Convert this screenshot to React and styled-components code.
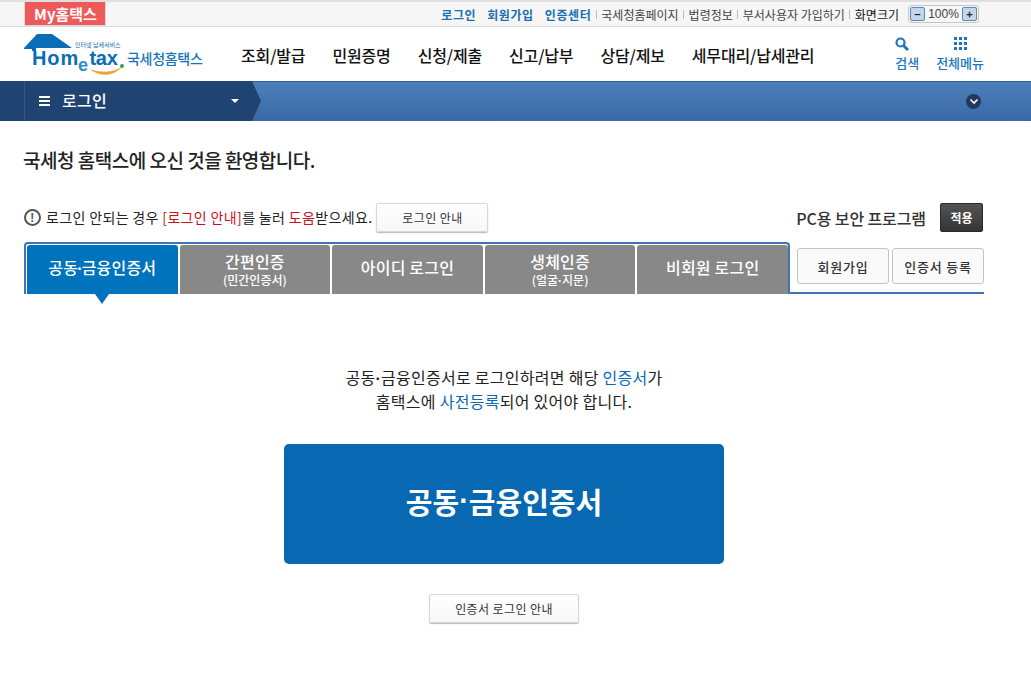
import React from "react";
import styled, { createGlobalStyle } from "styled-components";

const GlobalStyle = createGlobalStyle`
  html, body {
    margin: 0;
    padding: 0;
    background: #fff;
    font-family: "Noto Sans CJK KR", "Noto Sans", sans-serif;
    color: #222;
  }
  * { box-sizing: border-box; }
`;

const gnbItems = ["조회/발급", "민원증명", "신청/제출", "신고/납부", "상담/제보", "세무대리/납세관리"];

export default function App() {
  const tabItems = [
    { label: <>공동<Dot>·</Dot>금융인증서</>, key: "cert", active: true },
    { label: "간편인증", key: "easy", sub: "(민간인증서)" },
    { label: "아이디 로그인", key: "id" },
    { label: "생체인증", key: "bio", sub: <>(얼굴<Dot>·</Dot>지문)</> },
    { label: "비회원 로그인", key: "guest" },
  ];

  return (
    <Page>
      <GlobalStyle />
      <TopBar>
        <MyTab>My홈택스</MyTab>
        <TopLinks>
          <BlueLink>로그인</BlueLink>
          <BlueLink>회원가입</BlueLink>
          <BlueLink>인증센터</BlueLink>
          <GrayLink>국세청홈페이지</GrayLink>
          <GrayLink>법령정보</GrayLink>
          <GrayLink>부서사용자 가입하기</GrayLink>
          <GrayLink $dark>화면크기</GrayLink>
          <ZoomBox>
            <ZoomButton>−</ZoomButton>
            <ZoomValue>100%</ZoomValue>
            <ZoomButton>+</ZoomButton>
          </ZoomBox>
        </TopLinks>
      </TopBar>

      <Header>
        <Logo>
          <svg width="104" height="46" viewBox="0 0 104 46">
            <path d="M0 15 L13 1 H28 L48 15 H12 V18 H8 V16 H0 Z" fill="#0a6db5" />
            <path d="M67 37 Q83 47 97 35 Q84 42 67 37 Z" fill="#f0a030" stroke="#f0a030" strokeWidth="0.6" />
            <text x="8" y="32" fontFamily="Liberation Sans" fontWeight="700" fontSize="20" letterSpacing="0.9" fill="#0a6db5">Hom</text>
            <text x="54" y="38" fontFamily="Liberation Sans" fontWeight="700" fontSize="18" fill="#2b8fc4">e</text>
            <text x="65.5" y="32" fontFamily="Liberation Sans" fontWeight="700" fontSize="20" letterSpacing="-0.3" fill="#0a6db5">tax</text>
            <text x="51" y="14" fontFamily="Noto Sans CJK KR" fontSize="6" fill="#0a6db5">인터넷 납세서비스</text>
            <circle cx="98" cy="33" r="2" fill="#2aa84a" />
          </svg>
          <LogoName>국세청홈택스</LogoName>
        </Logo>
        <Gnb>
          {gnbItems.map((item) => (
            <GnbItem key={item}>{item}</GnbItem>
          ))}
        </Gnb>
        <HeaderTools>
          <ToolButton $iconLeft>
            <svg width="14" height="14" viewBox="0 0 14 14">
              <circle cx="5.5" cy="5.5" r="4" fill="none" stroke="#1b76bd" strokeWidth="2.2" />
              <path d="M8.5 8.5 L13 13" stroke="#1b76bd" strokeWidth="3" />
            </svg>
            <span>검색</span>
          </ToolButton>
          <ToolButton>
            <DotGrid>
              {Array.from({ length: 9 }).map((_, i) => (
                <i key={i} />
              ))}
            </DotGrid>
            <span>전체메뉴</span>
          </ToolButton>
        </HeaderTools>
      </Header>

      <SubBar>
        <LoginCrumb>
          <Burger>
            <i />
            <i />
            <i />
          </Burger>
          <CrumbLabel>로그인</CrumbLabel>
          <CrumbCaret />
        </LoginCrumb>
        <CollapseButton>
          <svg width="10" height="7" viewBox="0 0 10 7">
            <path d="M1.5 1.5 L5 5 L8.5 1.5" fill="none" stroke="#fff" strokeWidth="1.6" />
          </svg>
        </CollapseButton>
      </SubBar>

      <Content>
        <Title>국세청 홈택스에 오신 것을 환영합니다.</Title>

        <NoticeRow>
          <Notice>
            <NoticeIcon>!</NoticeIcon>
            <NoticeText>
              로그인 안되는 경우 <Red>[로그인 안내]</Red>를 눌러 <Red>도움</Red>받으세요.
            </NoticeText>
            <GuideButton>로그인 안내</GuideButton>
          </Notice>
          <Security>
            <SecurityLabel>PC용 보안 프로그램</SecurityLabel>
            <ApplyButton>적용</ApplyButton>
          </Security>
        </NoticeRow>

        <TabRow>
          <Tabs>
            {tabItems.map((tab) => (
              <Tab key={tab.key} $active={tab.active} $hasSub={!!tab.sub}>
                <TabLabel>{tab.label}</TabLabel>
                {tab.sub && <TabSub>{tab.sub}</TabSub>}
              </Tab>
            ))}
          </Tabs>
          <TabActions>
            <ActionButton>회원가입</ActionButton>
            <ActionButton>인증서 등록</ActionButton>
          </TabActions>
        </TabRow>

        <Body>
          <Intro>
            공동<Dot>·</Dot>금융인증서로 로그인하려면 해당 <Blue>인증서</Blue>가
            <br />
            홈택스에 <Blue>사전등록</Blue>되어 있어야 합니다.
          </Intro>
          <CertButton>공동<Dot>·</Dot>금융인증서</CertButton>
          <CertGuide>인증서 로그인 안내</CertGuide>
        </Body>
      </Content>
    </Page>
  );
}

const Page = styled.div`
  width: 1031px;
  height: 694px;
  overflow: hidden;
  background: #fff;
`;

const Dot = styled.span`
  font-family: "Liberation Sans", sans-serif;
  font-weight: 700;
  line-height: 0;
`;

const TopBar = styled.div`
  height: 27px;
  padding: 0 52px 0 24px;
  display: flex;
  justify-content: space-between;
  background: #f6f6f6;
  border-top: 2px solid #dfdfdf;
  border-bottom: 1px solid #dadada;
`;

const MyTab = styled.a`
  width: 82px;
  height: 24px;
  padding-left: 1px;
  display: flex;
  align-items: center;
  justify-content: center;
  background: #ee5a5a;
  border: 1px solid #d9d9d9;
  border-top: 0;
  color: #fff;
  font-size: 15px;
  font-weight: 700;
`;

const TopLinks = styled.div`
  display: flex;
  align-items: center;
  height: 24px;
  font-size: 12px;
`;

const BlueLink = styled.a`
  margin-left: 11px;
  color: #1b6fb0;
  font-weight: 700;
  letter-spacing: 0.6px;
`;

const GrayLink = styled.a`
  display: flex;
  align-items: center;
  color: ${(p) => (p.$dark ? "#111" : "#444")};
  &::before {
    content: "";
    width: 1px;
    height: 9px;
    margin: 0 4.5px;
    background: #bbb;
  }
`;

const ZoomBox = styled.div`
  width: 71px;
  height: 18px;
  margin-left: 9px;
  padding: 0 1px;
  display: flex;
  align-items: center;
  justify-content: space-between;
  border: 1px solid #c6c6c6;
  border-radius: 3px;
`;

const ZoomButton = styled.span`
  width: 15px;
  height: 14px;
  display: flex;
  align-items: center;
  justify-content: center;
  background: #c3d6ea;
  border: 1px solid #5a87b5;
  border-radius: 2px;
  font-size: 11px;
  line-height: 1;
  font-weight: 700;
  color: #223;
`;

const ZoomValue = styled.span`
  font-family: "Liberation Sans", sans-serif;
  font-size: 12px;
  color: #444;
`;

const Header = styled.header`
  height: 54px;
  padding: 0 47px 0 24px;
  display: flex;
  align-items: center;
  background: #fff;
`;

const Logo = styled.div`
  width: 217px;
  height: 46px;
  margin-top: 4px;
  display: flex;
  align-items: flex-start;
`;

const LogoName = styled.span`
  margin: 15px 0 0 -1px;
  font-size: 14px;
  line-height: 20px;
  font-weight: 500;
  letter-spacing: -0.3px;
  color: #1274ba;
  white-space: nowrap;
`;

const Gnb = styled.nav`
  display: flex;
  gap: 27px;
  flex: 1;
  padding-top: 2px;
`;

const GnbItem = styled.a`
  font-size: 16px;
  font-weight: 500;
  letter-spacing: -0.15px;
  color: #111;
  white-space: nowrap;
`;

const HeaderTools = styled.div`
  display: flex;
  gap: 17px;
`;

const ToolButton = styled.a`
  display: flex;
  flex-direction: column;
  align-items: center;
  gap: 3px;
  font-size: 13px;
  line-height: 18px;
  font-weight: 500;
  color: #1b76bd;
  svg {
    margin-right: ${(p) => (p.$iconLeft ? "10px" : "0")};
  }
`;

const DotGrid = styled.div`
  width: 13px;
  height: 14px;
  display: grid;
  grid-template-columns: repeat(3, 3px);
  grid-auto-rows: 3px;
  gap: 2px;
  i {
    background: #1b76bd;
  }
`;

const SubBar = styled.div`
  height: 40px;
  padding: 0 50px 0 0;
  display: flex;
  align-items: center;
  justify-content: space-between;
  background: linear-gradient(#4d80ba, #3a68a6);
  box-shadow: inset 0 1px 0 #2f5f98;
`;

const LoginCrumb = styled.div`
  position: relative;
  width: 252px;
  height: 40px;
  padding-left: 39px;
  display: flex;
  align-items: center;
  gap: 12px;
  background: #204472;
  &::before {
    content: "";
    position: absolute;
    left: 24px;
    top: 0;
    width: 1px;
    height: 40px;
    background: #2e5a8e;
  }
  &::after {
    content: "";
    position: absolute;
    left: 100%;
    top: 0;
    width: 0;
    height: 0;
    border-top: 20px solid transparent;
    border-bottom: 20px solid transparent;
    border-left: 9px solid #204472;
  }
`;

const Burger = styled.div`
  width: 11px;
  display: flex;
  flex-direction: column;
  gap: 2px;
  i {
    height: 2px;
    background: #fff;
  }
`;

const CrumbLabel = styled.span`
  flex: 1;
  padding-bottom: 2px;
  color: #fff;
  font-size: 16px;
  letter-spacing: 0.3px;
  font-weight: 500;
`;

const CrumbCaret = styled.span`
  width: 0;
  height: 0;
  margin-right: 13px;
  border-left: 4px solid transparent;
  border-right: 4px solid transparent;
  border-top: 4px solid #fff;
`;

const CollapseButton = styled.span`
  width: 15px;
  height: 15px;
  display: flex;
  align-items: center;
  justify-content: center;
  border-radius: 50%;
  background: #24395c;
`;

const Content = styled.main`
  padding: 0 47px 0 24px;
`;

const Title = styled.h1`
  margin: 0 0 0 -1px;
  padding-top: 25px;
  height: 82px;
  font-size: 19px;
  line-height: 27px;
  font-weight: 500;
  letter-spacing: -0.5px;
  color: #222;
`;

const NoticeRow = styled.div`
  height: 39px;
  display: flex;
  justify-content: space-between;
  align-items: flex-start;
`;

const Notice = styled.div`
  height: 29px;
  display: flex;
  align-items: center;
  font-size: 14px;
  letter-spacing: 0.35px;
  color: #222;
`;

const NoticeText = styled.span`
  padding-bottom: 2px;
`;

const NoticeIcon = styled.span`
  width: 17px;
  height: 17px;
  margin-right: 5px;
  display: flex;
  align-items: center;
  justify-content: center;
  border: 2px solid #555;
  border-radius: 50%;
  font-family: "Liberation Sans", sans-serif;
  font-size: 12px;
  font-weight: 700;
  color: #555;
`;

const Red = styled.em`
  font-style: normal;
  color: #c8111a;
`;

const Blue = styled.em`
  font-style: normal;
  color: #0a6ab0;
`;

const WhiteButton = styled.a`
  display: flex;
  align-items: center;
  justify-content: center;
  background: linear-gradient(#fff, #f7f7f7);
  border: 1px solid #d8d8d8;
  border-radius: 2px;
  box-shadow: 0 1px 1px #bbb;
  font-size: 12px;
  letter-spacing: 0.4px;
  color: #333;
`;

const GuideButton = styled(WhiteButton)`
  width: 112px;
  height: 29px;
  margin-left: 4px;
`;

const Security = styled.div`
  display: flex;
  align-items: center;
  height: 29px;
  gap: 14px;
  margin-right: 1px;
`;

const SecurityLabel = styled.span`
  padding-top: 1px;
  font-size: 16px;
  font-weight: 500;
  letter-spacing: -0.1px;
  color: #333;
`;

const ApplyButton = styled.a`
  width: 43px;
  height: 29px;
  display: flex;
  align-items: center;
  justify-content: center;
  background: linear-gradient(#555, #333);
  border-radius: 3px;
  box-shadow: 0 0 0 1px #2a2a2a inset;
  color: #fff;
  font-size: 12px;
  font-weight: 700;
`;

const TabRow = styled.div`
  height: 52px;
  display: flex;
  border-bottom: 2px solid #3f74b5;
`;

const Tabs = styled.div`
  width: 766px;
  height: 52px;
  padding: 1px 0 0 1px;
  display: flex;
  gap: 2px;
  background: #fff;
  border: 2px solid #3f74b5;
  border-bottom: 0;
  border-radius: 4px 4px 0 0;
  margin-bottom: -2px;
  position: relative;
  z-index: 1;
`;

const Tab = styled.a`
  position: relative;
  width: 151px;
  height: 49px;
  padding-bottom: ${(p) => (p.$hasSub ? "2px" : "5px")};
  display: flex;
  flex-direction: column;
  align-items: center;
  justify-content: center;
  background: ${(p) => (p.$active ? "#0073bd" : "#888")};
  border-radius: 3px 3px 0 0;
  color: #fff;
  ${(p) =>
    p.$active &&
    `&::after {
      content: "";
      position: absolute;
      left: 68px;
      top: 100%;
      border-left: 7px solid transparent;
      border-right: 7px solid transparent;
      border-top: 10px solid #0073bd;
    }`}
`;

const TabLabel = styled.span`
  font-size: 16px;
  line-height: 20px;
  letter-spacing: 0.2px;
  font-weight: 500;
  ${Dot} {
    margin: 0 -1px;
  }
`;

const TabSub = styled.span`
  margin-top: 2px;
  font-size: 12px;
  line-height: 14px;
  font-weight: 500;
`;

const TabActions = styled.div`
  margin-left: 7px;
  padding-top: 6px;
  display: flex;
  gap: 3px;
`;

const ActionButton = styled.a`
  width: 92px;
  height: 36px;
  display: flex;
  align-items: center;
  justify-content: center;
  background: #fafafa;
  border: 1px solid #c4c4c4;
  border-radius: 3px;
  font-size: 13px;
  letter-spacing: 0.8px;
  font-weight: 500;
  color: #333;
`;

const Body = styled.section`
  padding-top: 71px;
  display: flex;
  flex-direction: column;
  align-items: center;
`;

const Intro = styled.p`
  margin: 0;
  font-size: 16px;
  line-height: 24px;
  letter-spacing: 0.28px;
  text-align: center;
  color: #222;
`;

const CertButton = styled.a`
  width: 440px;
  height: 120px;
  margin-top: 31px;
  padding-bottom: 7px;
  display: flex;
  align-items: center;
  justify-content: center;
  background: #0868b1;
  border-radius: 5px;
  color: #fff;
  font-size: 29px;
  font-weight: 700;
`;

const CertGuide = styled(WhiteButton)`
  width: 150px;
  height: 29px;
  margin-top: 30px;
`;
